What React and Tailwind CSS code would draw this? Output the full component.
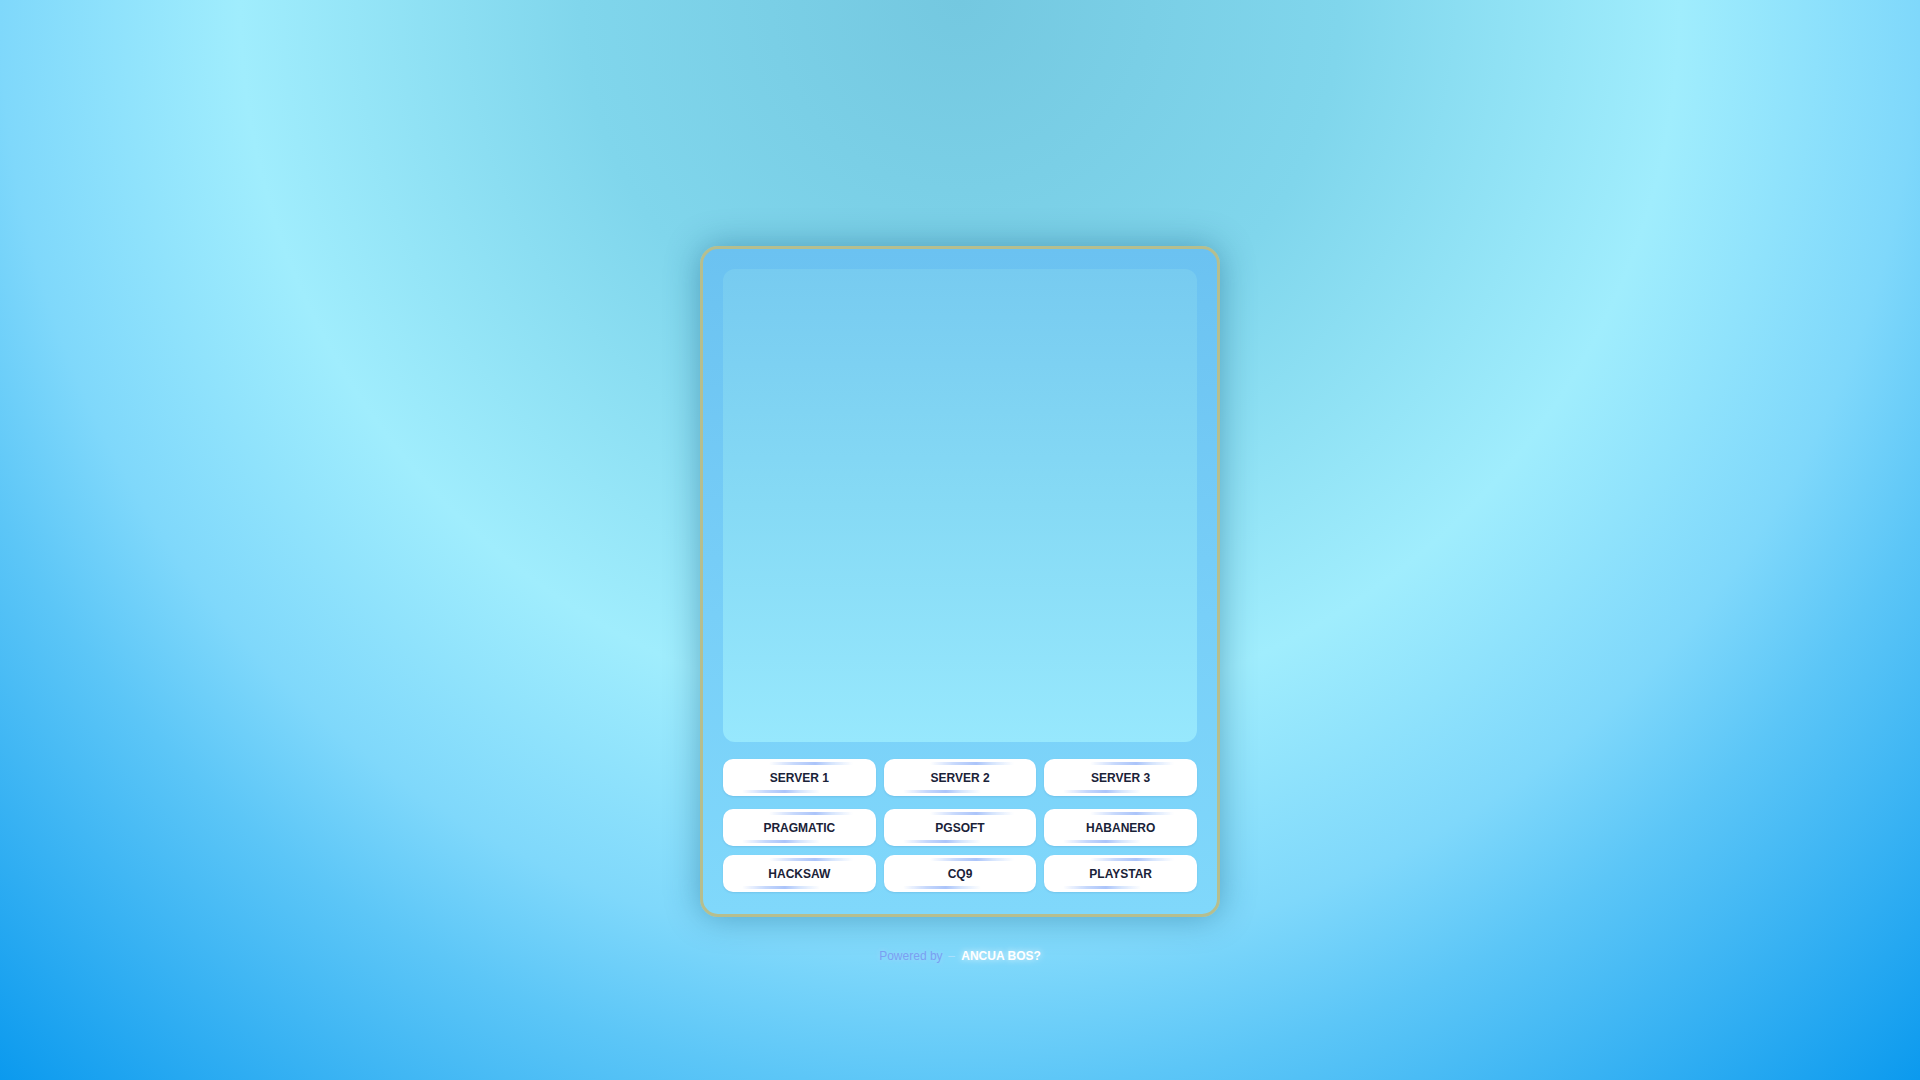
import React from 'react';

const servers = ['SERVER 1', 'SERVER 2', 'SERVER 3'];
const providers = ['PRAGMATIC', 'PGSOFT', 'HABANERO', 'HACKSAW', 'CQ9', 'PLAYSTAR'];

function GameButton({ label }) {
  return (
    <button className="relative h-[37px] rounded-[10px] bg-white text-[12px] font-bold text-[#1a2238] shadow-[0_1px_2px_rgba(0,60,120,0.12)]">
      {/* garis hiasan atas & bawah */}
      <span className="absolute top-[3px] left-[46px] w-[84px] h-[3px] rounded-full blur-[0.6px] bg-[linear-gradient(90deg,transparent,#c6d8fc_30%,#abc4fa_55%,#d6e5fd_75%,transparent)]" />
      <span className="absolute bottom-[3px] left-[19px] w-[78px] h-[3px] rounded-full blur-[0.6px] bg-[linear-gradient(90deg,transparent,#c6d8fc_30%,#abc4fa_55%,#d6e5fd_75%,transparent)]" />
      {label}
    </button>
  );
}

export default function App() {
  return (
    <div
      className="min-h-screen w-full flex flex-col items-center pt-[246px] bg-[radial-gradient(circle_at_50%_0%,#74c8e0_0px,#80d6ec_380px,#a0edfd_720px,#7fd8fb_960px,#5cc6f7_1090px,#0a99ee_1450px)]"
      style={{ fontFamily: '"Liberation Sans", Arial, sans-serif' }}
    >
      <div className="w-[520px] rounded-[18px] border-[3px] border-[#b6be8e] px-5 pt-5 pb-[22px] bg-[linear-gradient(180deg,#6bc2f1_0%,#78cff8_55%,#80d8fb_100%)] shadow-[0_0_34px_rgba(20,90,130,0.45)]">
        <div className="h-[473px] rounded-xl bg-[linear-gradient(180deg,#77cbf0_0%,#86daf5_50%,#97e8fd_100%)]" />

        <div className="mt-[17px] grid grid-cols-3 gap-2">
          {servers.map((s) => (
            <GameButton key={s} label={s} />
          ))}
        </div>

        <div className="mt-[13px] grid grid-cols-3 gap-x-2 gap-y-[9px]">
          {providers.map((p) => (
            <GameButton key={p} label={p} />
          ))}
        </div>
      </div>

      <div className="mt-[32px] flex items-center gap-[6px] text-[12px] leading-[14px]">
        <span className="text-[#7a9ff2] [text-shadow:0_0_5px_rgba(170,215,255,0.9)]">Powered by</span>
        <span className="text-[#c2e2fc] opacity-70">–</span>
        <span className="font-bold text-white [text-shadow:0_0_6px_rgba(255,255,255,0.85)]">ANCUA BOS?</span>
      </div>
    </div>
  );
}
